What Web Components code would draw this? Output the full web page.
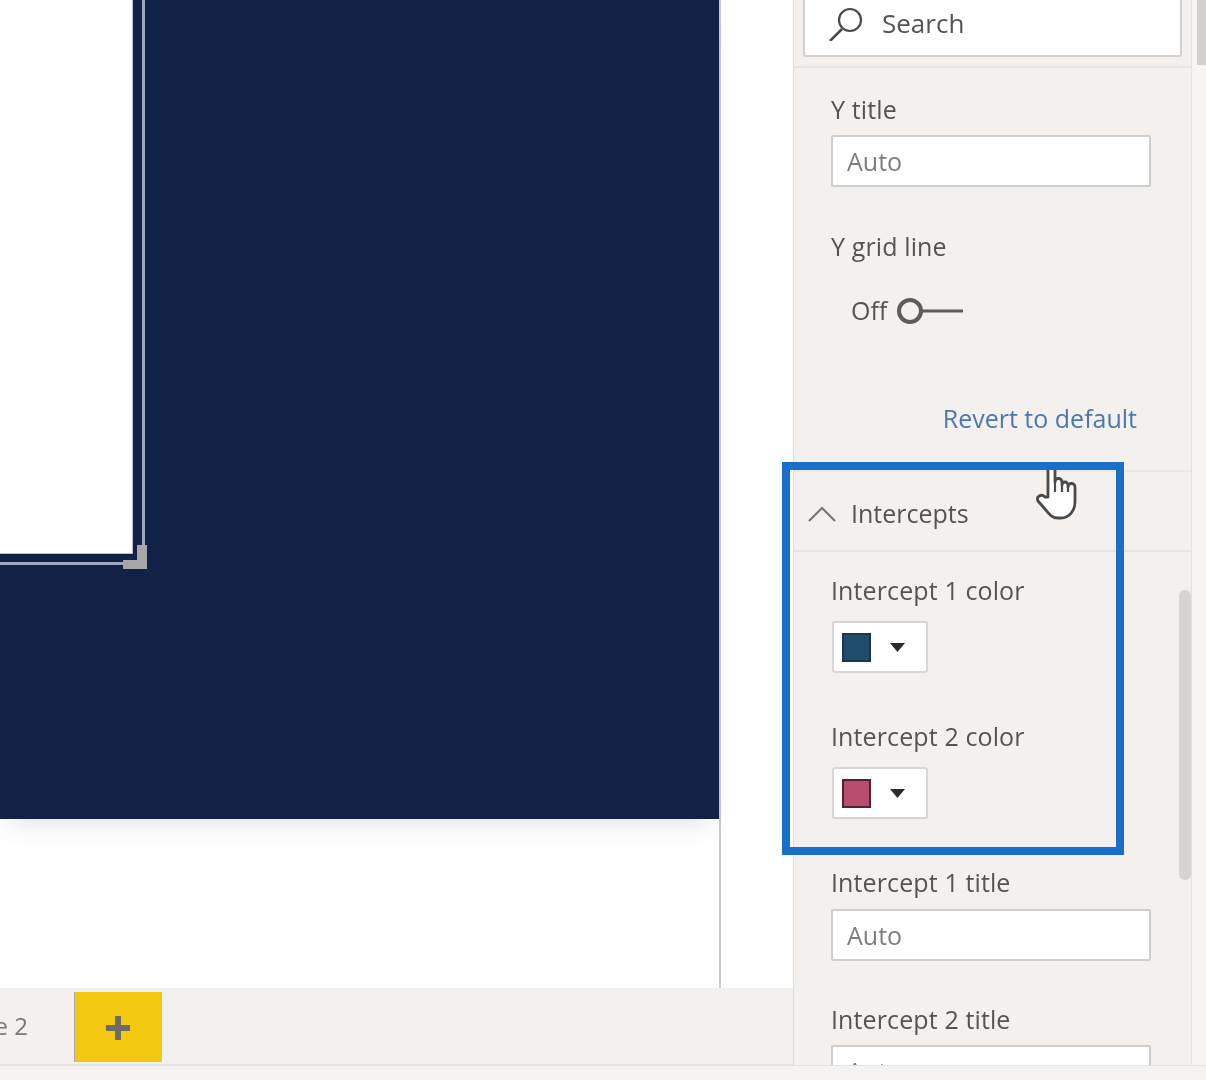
<!DOCTYPE html>
<html lang="en">
<head>
<meta charset="utf-8">
<title>Intercepts format panel</title>
<style>
  html, body { margin: 0; padding: 0; background: #fff; overflow: hidden; }
  body { font-family: "Open Sans", "Noto Sans", "Liberation Sans", sans-serif; }
</style>
</head>
<body>
<x-app>
  <x-report-canvas slot="canvas"></x-report-canvas>
  <x-tabbar slot="tabs" page="Page 2"></x-tabbar>
  <x-panel slot="panel">
    <x-search-box slot="search">Search</x-search-box>
    <x-field label="Y title" style="margin-top:26px"><x-text-input>Auto</x-text-input></x-field>
    <x-field label="Y grid line" style="margin-top:44px"><x-toggle>Off</x-toggle></x-field>
    <x-revert>Revert to default</x-revert>
    <x-section-header>Intercepts</x-section-header>
    <x-field label="Intercept 1 color" style="margin-top:23px"><x-color-select color="#1f4c6b" edge="#16374f"></x-color-select></x-field>
    <x-field label="Intercept 2 color" style="margin-top:48px"><x-color-select color="#b94d6d" edge="#55202f"></x-color-select></x-field>
    <x-field label="Intercept 1 title" style="margin-top:48px"><x-text-input style="margin-top:12px">Auto</x-text-input></x-field>
    <x-field label="Intercept 2 title" style="margin-top:43px"><x-text-input>Auto</x-text-input></x-field>
  </x-panel>
  <x-hand-cursor slot="overlay"></x-hand-cursor>
  <x-highlight slot="overlay"></x-highlight>
</x-app>

<script>
function shadow(el, html) {
  el.attachShadow({ mode: "open" }).innerHTML = html;
}
function def(name, render) {
  customElements.define(name, class extends HTMLElement {
    connectedCallback() {
      if (!this.shadowRoot) shadow(this, render(this));
    }
  });
}

def("x-app", () => `
  <style>
    :host { display:grid; position:relative; width:1206px; height:1080px; overflow:hidden; filter:blur(.45px);
            grid-template-columns:793px 413px; grid-template-rows:1065px 15px; background:#fff; }
    .left { display:flex; flex-direction:column; min-width:0; overflow:hidden; }
    .right { display:flex; min-width:0; overflow:hidden; background:#f7f5f3; }
    .thumb-col { flex:1; padding-left:5px; }
    .thumb { width:9px; height:65px; background:#d3d0cd; }
    .foot { grid-column:1 / 3; background:#f5f3f1; border-top:1px solid #e6e3e0; box-sizing:border-box; }
  </style>
  <div class="left"><slot name="canvas"></slot><slot name="tabs"></slot></div>
  <div class="right"><slot name="panel"></slot><div class="thumb-col"><div class="thumb"></div></div></div>
  <div class="foot"></div>
  <slot name="overlay"></slot>
  <slot></slot>`);

def("x-report-canvas", () => `
  <style>
    :host { display:block; height:988px; width:721px; box-sizing:border-box; border-right:2px solid #c8c8c8; flex:none; }
    .stage { position:relative; height:819px; background:#122146; box-shadow:0 16px 22px -10px rgba(60,70,110,.14); }
    .inner { position:absolute; inset:0; overflow:hidden; }
    .card { position:absolute; left:-20px; top:-20px; width:152px; height:573px; background:#fff; box-shadow:0 0 0 1px #b9bfd0; }
    .frame { position:absolute; left:-20px; top:-20px; width:165px; height:585px; box-sizing:border-box; border:solid #9ea6bd; border-width:0 3px 3px 0; }
    svg { position:absolute; left:120px; top:542px; }
  </style>
  <div class="stage">
    <div class="inner">
      <div class="frame"></div>
      <div class="card"></div>
      <svg width="30" height="30" viewBox="0 0 30 30"><path d="M17 3h10v24H3v-9h14z" fill="#a7a7a7"/></svg>
    </div>
  </div>`);

def("x-tabbar", (el) => `
  <style>
    :host { display:flex; height:77px; background:#f3f0ee; border-bottom:1px solid #e6e3e0; box-sizing:border-box; flex:none; }
    .tab { width:74px; flex:none; display:flex; justify-content:flex-end; overflow:hidden; padding-right:46px; box-sizing:border-box;
           align-items:center; font-size:24px; color:#7a7876; white-space:nowrap; line-height:78px; }
    .add { width:88px; height:70px; margin-top:4px; background:#f2c811; border-left:1px solid #a9a69c; box-sizing:border-box;
           display:flex; align-items:center; justify-content:center; padding:2px 2px 0 0; }
  </style>
  <div class="tab"><span>${el.getAttribute("page")}</span></div>
  <div class="add"><svg width="26" height="26" viewBox="0 0 26 26"><path d="M10 1h6v9h9v6h-9v9h-6v-9H1v-6h9z" fill="#6e6c62"/></svg></div>`);

def("x-panel", () => `
  <style>
    :host { display:block; position:relative; width:399px; height:1065px; box-sizing:border-box; overflow:hidden; flex:none;
            background:#f3f0ee; border-left:1px solid #dedbd8; border-right:1px solid #e3e0dd; font-size:25px; color:#5f5d5b; }
    .head { height:68px; box-sizing:border-box; border-bottom:2px solid #e6e3e0; padding-left:9px; }
    .thumb { position:absolute; left:385px; top:590px; width:12px; height:290px; border-radius:6px; background:#d6d3d0; }
  </style>
  <div class="head"><slot name="search"></slot></div>
  <slot></slot>
  <div class="thumb"></div>`);

def("x-search-box", () => `
  <style>
    :host { display:flex; align-items:center; width:379px; height:57px; box-sizing:border-box; background:#fff; gap:16px;
            border:2px solid #d2d0ce; border-top:0; border-radius:0 0 3px 3px; padding:0 0 9px 23px; font-size:26px; color:#555351; line-height:30px; }
    svg { flex:none; }
  </style>
  <svg width="38" height="36" viewBox="0 0 38 36" fill="none" stroke="#4c4a48">
    <circle cx="22" cy="15" r="11" stroke-width="2.2"/>
    <path d="M14 24L2 36" stroke-width="2.6"/>
  </svg>
  <span><slot></slot></span>`);

def("x-field", (el) => `
  <style>
    :host { display:block; padding-left:37px; }
    .label { line-height:30px; height:30px; white-space:nowrap; font-size:25px; letter-spacing:.12px; color:#565452; }
  </style>
  <div class="label">${el.getAttribute("label")}</div>
  <slot></slot>`);

def("x-text-input", () => `
  <style>
    :host { display:block; width:320px; height:52px; margin-top:11px; box-sizing:border-box; background:#fff;
            border:2px solid #d0cecc; border-radius:2px; padding-left:14px; line-height:48px; color:#7f7d7b; font-size:25px; }
  </style>
  <slot></slot>`);

def("x-toggle", () => `
  <style>
    :host { display:flex; align-items:center; gap:10px; height:30px; margin:34px 0 0 20px; color:#565452; font-size:25px; line-height:30px; }
    svg { flex:none; margin-top:2px; }
  </style>
  <span><slot></slot></span>
  <svg width="66" height="28" viewBox="0 0 66 28" fill="none" stroke="#5f5d5b">
    <circle cx="13" cy="14" r="11" stroke-width="4"/>
    <path d="M24 14H66" stroke-width="3"/>
  </svg>`);

def("x-revert", () => `
  <style>
    :host { display:block; text-align:right; padding-right:54px; margin-top:78px; line-height:30px; height:30px; color:#4c78ae; font-size:25px; white-space:nowrap; }
  </style>
  <slot></slot>`);

def("x-section-header", () => `
  <style>
    :host { display:flex; align-items:center; gap:15px; height:82px; box-sizing:border-box; margin-top:37px; padding:4px 0 0 14px;
            border-top:2px solid #ebe8e5; border-bottom:2px solid #e8e5e2; color:#565452; font-size:25px; }
    svg { flex:none; margin-top:2px; }
  </style>
  <svg width="28" height="16" viewBox="0 0 28 16" fill="none" stroke="#77757a" stroke-width="2"><path d="M1 15L14 2L27 15"/></svg>
  <span><slot></slot></span>`);

def("x-color-select", (el) => `
  <style>
    :host { display:flex; align-items:center; width:96px; height:52px; margin:16px 0 0 1px; box-sizing:border-box; background:#fff;
            border:2px solid #d8d6d4; border-radius:3px; padding-left:8px; gap:19px; }
    .sw { width:29px; height:29px; box-sizing:border-box; background:${el.getAttribute("color")}; border:2px solid ${el.getAttribute("edge")}; }
    svg { flex:none; }
  </style>
  <div class="sw"></div>
  <svg width="15" height="9" viewBox="0 0 15 9"><path d="M0 0H15L7.5 9z" fill="#2b2b2b"/></svg>`);

def("x-highlight", () => `
  <style>
    :host { display:block; position:absolute; left:782px; top:462px; width:342px; height:393px; box-sizing:border-box;
            border:8px solid #1a6fc8; pointer-events:none; }
  </style>`);

def("x-hand-cursor", () => `
  <style>
    :host { display:block; position:absolute; left:1030px; top:460px; width:55px; height:65px; }
  </style>
  <svg width="55" height="65" viewBox="0 0 55 65">
    <path d="M18 37V8a3.5 3.5 0 0 1 7 0V22a3.5 3.5 0 0 1 7 0V25a3 3 0 0 1 6 0V27a3.5 3.5 0 0 1 7 0V42c0 9-6 16-14 16h-3c-6 0-9-4-13-9L8 41c-2-4 3-8 7-4z"
      fill="#fff" stroke="#4a4a4a" stroke-width="2.8" stroke-linejoin="round"/>
    <path d="M25 22V32M32 24V32M38 26V32" fill="none" stroke="#4a4a4a" stroke-width="2.2"/>
  </svg>`);
</script>
</body>
</html>
